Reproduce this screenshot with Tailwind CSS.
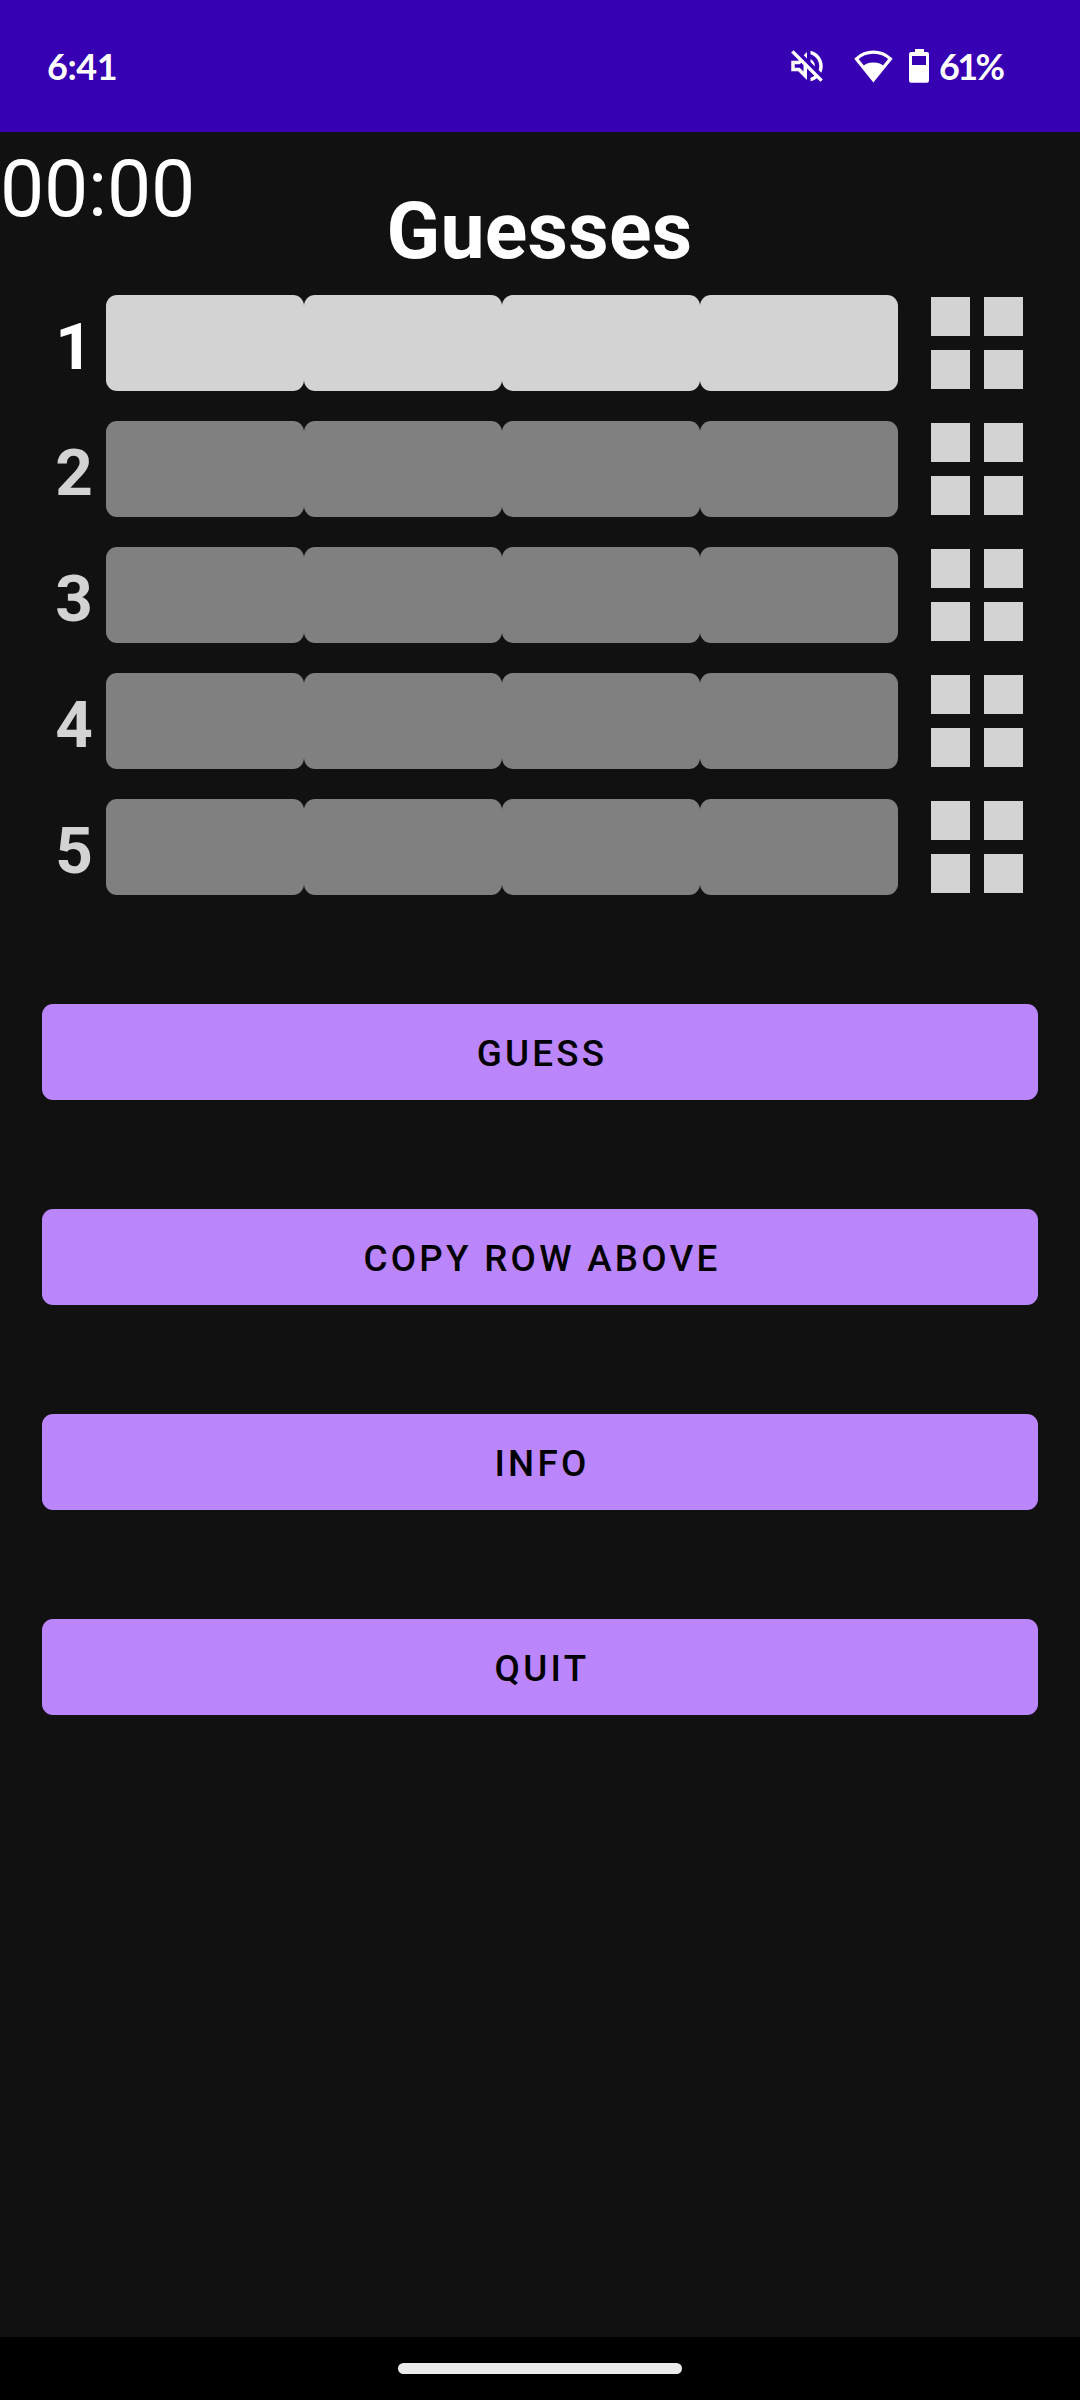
<!DOCTYPE html>
<html lang="en">
<head>
<meta charset="utf-8">
<title>Guesses</title>
<script src="https://cdn.jsdelivr.net/npm/@tailwindcss/browser@4"></script>
</head>
<body class="bg-[#111111]">
<div class="flex h-[2400px] w-[1080px] flex-col overflow-hidden bg-[#111111] font-['Roboto',sans-serif] text-white">
  <header class="flex h-[132px] shrink-0 items-center justify-between bg-[#3700b3] pl-[47px] pr-[73px] font-['Lato',sans-serif] text-[36px] font-bold leading-[132px]">
    <span class="tracking-[-0.4px]">6:41</span>
    <div class="flex items-center">
      <svg class="mr-[25px] h-[42px] w-[42px]" viewBox="0 0 24 24" fill="currentColor"><path d="M4.34 2.93L2.93 4.34 7.29 8.7 7 9H3v6h4l5 5v-6.59l4.18 4.18c-.65.49-1.38.88-2.18 1.11v2.06c1.34-.3 2.57-.92 3.61-1.75l2.05 2.05 1.41-1.41L4.34 2.93zM10 15.17L7.83 13H5v-2h2.83l.88-.88L10 11.41v3.76zM19 12c0 .82-.15 1.61-.41 2.34l1.53 1.53c.56-1.17.88-2.48.88-3.87 0-4.28-2.99-7.86-7-8.77v2.06c2.89.86 5 3.54 5 6.71zm-7-8l-1.88 1.88L12 7.76zm4.5 8c0-1.77-1.02-3.29-2.5-4.03v1.79l2.48 2.48c.01-.08.02-.16.02-.24z"/></svg>
      <svg class="mr-[16px] h-[34px] w-[40px]" viewBox="0 0 40 34" fill="none"><path d="M3.4 9.8A25 25 0 0 1 37.4 9.8L20.4 31Z" stroke="currentColor" stroke-width="3.2"/><path d="M10 17.6Q13 13.4 20.4 13.4T31 17.6L20.4 31.5Z" fill="currentColor"/></svg>
      <svg class="mr-[10px] h-[34px] w-5" viewBox="0 0 20 34" fill="currentColor"><path fill-rule="evenodd" d="M6 0H15V3H18Q20 3 20 5V31.5Q20 33.7 18 33.7H2Q0 33.7 0 31.5V5Q0 3 2 3H6ZM3 7V16H17V7Z"/></svg>
      <span class="w-[68px] tracking-[-2.6px]">61%</span>
    </div>
  </header>

  <main class="flex grow flex-col">
    <div class="grid h-[163px] shrink-0 grid-cols-3 text-[78.75px] leading-[92px]">
      <div class="pt-[11px] tracking-[-0.2px]">00:00</div>
      <h1 class="pr-px pt-[53px] text-center font-bold tracking-[0.25px]">Guesses</h1>
    </div>
    <div id="rows" class="flex flex-col gap-[30px]"></div>
    <div class="mt-[109px] flex flex-col gap-[109px] px-[42px] text-[36.75px] font-medium leading-[96px] tracking-[0.0892857em] text-black">
      <button class="h-24 rounded-[11px] bg-[#bb86fc] pl-1 pt-[2px]">GUESS</button>
      <button class="h-24 rounded-[11px] bg-[#bb86fc] pl-1 pt-[2px]">COPY ROW ABOVE</button>
      <button class="h-24 rounded-[11px] bg-[#bb86fc] pl-1 pt-[2px]">INFO</button>
      <button class="h-24 rounded-[11px] bg-[#bb86fc] pl-1 pt-[2px]">QUIT</button>
    </div>
  </main>

  <footer class="flex h-[63px] shrink-0 justify-center bg-black pt-[26px]">
    <div class="h-[11px] w-[284px] rounded-full bg-[#ebebeb]"></div>
  </footer>
</div>
<script>
  const cell = c => `<div class="h-24 w-[198px] rounded-[11px] ${c}"></div>`;
  const peg = '<div class="h-[39px] w-[39px] bg-[#d3d3d3]"></div>';
  document.getElementById('rows').innerHTML = [1, 2, 3, 4, 5].map(n => `
    <div class="flex h-24 items-center">
      <div class="w-[106px] pr-[13px] pt-[7px] text-right text-[65.625px] font-bold leading-[96px] ${n === 1 ? 'text-white' : 'text-[#d3d3d3]'}">${n}</div>
      <div class="flex">${cell(n === 1 ? 'bg-[#d3d3d3]' : 'bg-[#808080]').repeat(4)}</div>
      <div class="ml-[33px] grid grid-cols-2 gap-[14px]">${peg.repeat(4)}</div>
    </div>`).join('');
</script>
</body>
</html>
